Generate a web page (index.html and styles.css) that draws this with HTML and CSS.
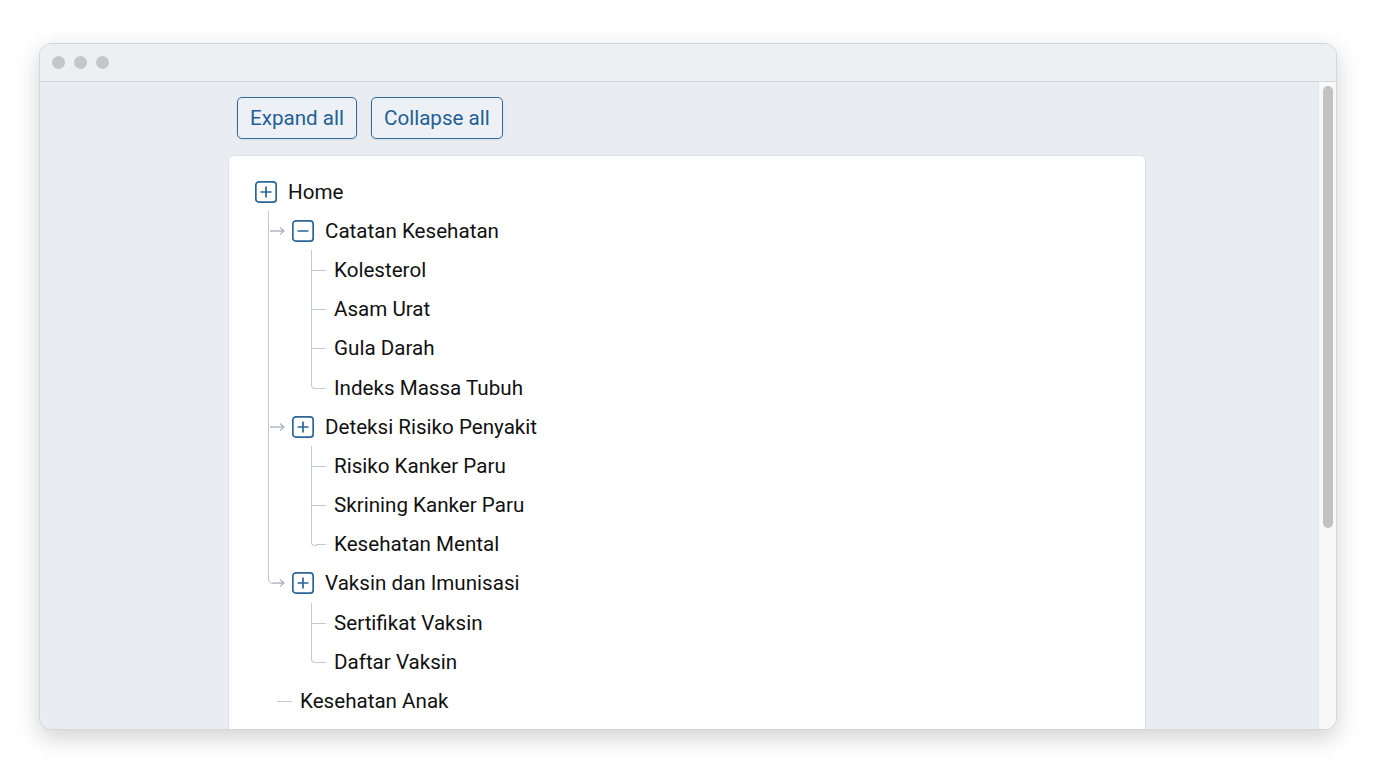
FILE: index.html
```html
<!DOCTYPE html>
<html lang="id">
<head>
    <meta charset="UTF-8">
    <meta name="viewport" content="width=device-width, initial-scale=1.0">
    <title>Menu Kesehatan</title>
    <link rel="stylesheet" href="styles.css">
</head>
<body>

<div class="window">
    <div class="titlebar">
        <span class="dot"></span>
        <span class="dot"></span>
        <span class="dot"></span>
    </div>
    <div class="viewport">
        <div class="page">
            <div class="toolbar">
                <button class="btn">Expand all</button>
                <button class="btn">Collapse all</button>
            </div>
            <div class="card">
                <div class="tree">
                    <div class="row">
                        <svg class="toggle" viewBox="0 0 22 22"><rect x="0.85" y="0.85" width="20.3" height="20.3" rx="3"/><path d="M5.5 11h11M11 5.5v11"/></svg>
                        <span class="label">Home</span>
                    </div>
                    <ul class="branch">
                        <li class="node">
                            <div class="row">
                                <svg class="link" viewBox="0 0 24 12"><path d="M2 6h14M12 2.5l4 3.5-4 3.5"/></svg>
                                <svg class="toggle" viewBox="0 0 22 22"><rect x="0.85" y="0.85" width="20.3" height="20.3" rx="3"/><path d="M5.5 11h11"/></svg>
                                <span class="label">Catatan Kesehatan</span>
                            </div>
                            <ul class="leaves">
                                <li class="leaf"><div class="row"><span class="label">Kolesterol</span></div></li>
                                <li class="leaf"><div class="row"><span class="label">Asam Urat</span></div></li>
                                <li class="leaf"><div class="row"><span class="label">Gula Darah</span></div></li>
                                <li class="leaf"><div class="row"><span class="label">Indeks Massa Tubuh</span></div></li>
                            </ul>
                        </li>
                        <li class="node">
                            <div class="row">
                                <svg class="link" viewBox="0 0 24 12"><path d="M2 6h14M12 2.5l4 3.5-4 3.5"/></svg>
                                <svg class="toggle" viewBox="0 0 22 22"><rect x="0.85" y="0.85" width="20.3" height="20.3" rx="3"/><path d="M5.5 11h11M11 5.5v11"/></svg>
                                <span class="label">Deteksi Risiko Penyakit</span>
                            </div>
                            <ul class="leaves">
                                <li class="leaf"><div class="row"><span class="label">Risiko Kanker Paru</span></div></li>
                                <li class="leaf"><div class="row"><span class="label">Skrining Kanker Paru</span></div></li>
                                <li class="leaf"><div class="row"><span class="label">Kesehatan Mental</span></div></li>
                            </ul>
                        </li>
                        <li class="node">
                            <div class="row">
                                <svg class="link" viewBox="0 0 24 12"><path d="M5 6h11M12 2.5l4 3.5-4 3.5"/></svg>
                                <svg class="toggle" viewBox="0 0 22 22"><rect x="0.85" y="0.85" width="20.3" height="20.3" rx="3"/><path d="M5.5 11h11M11 5.5v11"/></svg>
                                <span class="label">Vaksin dan Imunisasi</span>
                            </div>
                            <ul class="leaves">
                                <li class="leaf"><div class="row"><span class="label">Sertifikat Vaksin</span></div></li>
                                <li class="leaf"><div class="row"><span class="label">Daftar Vaksin</span></div></li>
                            </ul>
                        </li>
                    </ul>
                    <div class="row loose">
                        <span class="dash"></span>
                        <span class="label">Kesehatan Anak</span>
                    </div>
                </div>
            </div>
        </div>
        <div class="scrollbar"><div class="thumb"></div></div>
    </div>
</div>

</body>
</html>
```

FILE: styles.css
```css
* {
    box-sizing: border-box;
    margin: 0;
    padding: 0;
}
body {
    background-color: #fff;
    padding: 43px 39px 38px 39px;
    font-family: Roboto, "Liberation Sans", sans-serif;
    height: 100vh;
}
.window {
    height: 687px;
    display: flex;
    flex-direction: column;
    border: 1px solid #d3d7db;
    border-radius: 12px;
    overflow: hidden;
    box-shadow: 0 8px 24px rgba(0, 0, 0, 0.18);
    background-color: #e9edf1;
}
.titlebar {
    height: 38px;
    flex-shrink: 0;
    display: flex;
    align-items: center;
    gap: 9px;
    padding-left: 12px;
    background-color: #edf0f3;
    border-bottom: 1px solid #d6dadf;
}
.dot {
    width: 13px;
    height: 13px;
    border-radius: 50%;
    background-color: #c4c6c9;
}
.viewport {
    flex: 1;
    display: flex;
    overflow: hidden;
}
.page {
    flex: 1;
    padding: 15px 0 0 188px;
    overflow: hidden;
}
.toolbar {
    display: flex;
    gap: 14px;
    padding-left: 9px;
    margin-bottom: 16px;
}
.btn {
    height: 42px;
    padding: 0 12px;
    font-family: Roboto, "Liberation Sans", sans-serif;
    font-size: 20.6px;
    color: #1f5f95;
    background-color: #edf1f5;
    border: 1px solid #2f6b9e;
    border-radius: 5px;
    box-shadow: 0 1px 3px rgba(0, 0, 0, 0.08);
    cursor: pointer;
}
.card {
    width: 918px;
    min-height: 620px;
    background-color: #fff;
    border: 1px solid #dde1e6;
    border-radius: 6px;
    padding: 16px 0 0 26px;
}
.tree ul {
    list-style: none;
}
.row {
    display: flex;
    align-items: center;
    height: 39.2px;
    font-size: 20.6px;
    color: #111;
}
.toggle {
    width: 22px;
    height: 22px;
    margin-right: 11px;
    fill: none;
    stroke: #2c6698;
    stroke-width: 1.7;
}
.link {
    width: 24px;
    height: 12px;
    fill: none;
    stroke: #b0b8c0;
    stroke-width: 1.3;
}
.branch {
    margin-left: 13px;
}
.node {
    position: relative;
}
.node::before {
    content: "";
    position: absolute;
    left: 0;
    top: 0;
    bottom: 0;
    border-left: 1.5px solid #c3c9cf;
}
.node:last-child::before {
    bottom: auto;
    height: 19.6px;
    width: 5px;
    border-bottom: 1.3px solid #b0b8c0;
    border-bottom-left-radius: 5px;
}
.leaves {
    margin-left: 43px;
}
.leaf {
    position: relative;
    padding-left: 23px;
}
.leaf::before {
    content: "";
    position: absolute;
    left: 0;
    top: 0;
    bottom: 0;
    border-left: 1.5px solid #c3c9cf;
}
.leaf::after {
    content: "";
    position: absolute;
    left: 0;
    top: 19.6px;
    width: 15px;
    border-top: 1.3px solid #c3c9cf;
}
.leaf:last-child::before {
    bottom: auto;
    height: 20px;
    width: 5px;
    border-bottom: 1.3px solid #c3c9cf;
    border-bottom-left-radius: 4px;
}
.leaf:last-child::after {
    left: 5px;
    width: 10px;
}
.loose {
    margin-left: 22px;
    gap: 8px;
}
.dash {
    width: 15px;
    border-top: 1.3px solid #c3c9cf;
}
.scrollbar {
    width: 18px;
    flex-shrink: 0;
    background-color: #f8f8f8;
    border-left: 1px solid #e4e6e8;
    padding: 4px 3px 0 4px;
}
.thumb {
    height: 442px;
    border-radius: 5px;
    background-color: #c2c2c2;
}
```
